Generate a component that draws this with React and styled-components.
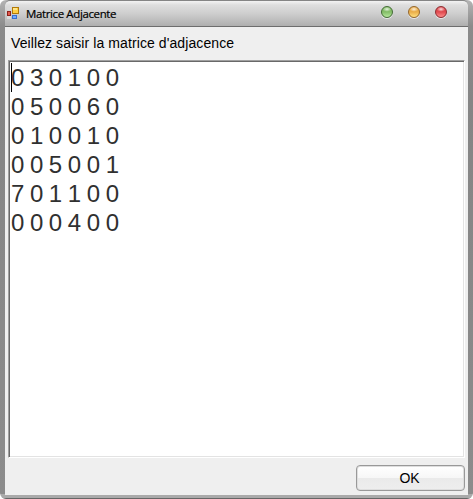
import React from "react";
import styled, { createGlobalStyle } from "styled-components";

const GlobalStyle = createGlobalStyle`
  * { box-sizing: border-box; }
  body { margin: 0; background: #fff; overflow: hidden; }
`;

const Window = styled.div`
  width: 473px;
  height: 499px;
  display: flex;
  flex-direction: column;
  padding: 0 5px 5px;
  overflow: hidden;
  border-radius: 6px;
  background: linear-gradient(#b4b4b4, #8b8b8b 26px, #858585 100px, #8c8c8c 494px, #aaa 494px, #aaa 498px, #666 498px);
  font-family: "Liberation Sans", Arial, sans-serif;
`;

const TitleBar = styled.header`
  height: 27px;
  flex: none;
  display: flex;
  align-items: center;
  padding: 0 21px 0 1px;
  border-top: 1px solid #858585;
  border-bottom: 1px solid #6d6d6d;
  border-radius: 5px 5px 0 0;
  background: linear-gradient(#f3f3f3, #dedede 4px, #cfcfcf 12px, #afafaf);
`;

const AppIcon = styled.svg`
  width: 14px;
  height: 14px;
  flex: none;
  align-self: flex-start;
  margin-top: 5px;
`;

const Title = styled.h1`
  margin: 0 auto 0 6px;
  font: 500 11.5px/16px "Open Sans", "Noto Sans", sans-serif;
  letter-spacing: -0.38px;
  color: #000;
  -webkit-text-stroke: 0.2px #000;
  white-space: nowrap;
`;

const Controls = styled.div`
  display: flex;
  gap: 15px;
  margin-top: -3px;
`;

const Orb = styled.button`
  width: 12px;
  height: 12px;
  padding: 0;
  border: 1px solid ${(p) => p.$edge};
  border-radius: 50%;
  background: radial-gradient(ellipse 4px 2.5px at 50% 22%, #fffc, #fff0),
    linear-gradient(${(p) => p.$mid}, ${(p) => p.$mid} 50%, ${(p) => p.$low});
  box-shadow: 0 1px 0 #e8e8e8;
`;

const Client = styled.main`
  flex: 1;
  display: flex;
  flex-direction: column;
  padding: 0 3px 4px;
  background: #efefef;
`;

const Prompt = styled.label`
  height: 33px;
  flex: none;
  padding: 8px 0 0 3px;
  font-size: 14px;
  line-height: 17px;
  letter-spacing: 0.09px;
  color: #000;
  white-space: nowrap;
`;

const Matrix = styled.div`
  width: 457px;
  height: 398px;
  flex: none;
  padding: 1px 0 0 2px;
  border: 1px solid;
  border-color: #a0a0a0 #fff #fff #a0a0a0;
  box-shadow: inset 1px 1px 0 #696969, inset -1px -1px 0 #e3e3e3;
  background: #fff;
  display: flex;
`;

const Caret = styled.span`
  width: 1px;
  height: 29px;
  margin-top: 1px;
  background: #000;
`;

const Values = styled.pre`
  margin: 1px 0 0 -1px;
  font: 24px/29px "Liberation Sans", Arial, sans-serif;
  letter-spacing: -0.54px;
  color: #303030;
`;

const Actions = styled.footer`
  display: flex;
  justify-content: flex-end;
  padding-top: 7px;
`;

const OkButton = styled.button`
  width: 109px;
  height: 26px;
  padding: 0 2px 0 0;
  border: 1px solid #999;
  border-radius: 4px;
  background: linear-gradient(#fff, #f7f7f7 48%, #eaeaea 52%, #eee);
  box-shadow: inset 0 0 0 1px #dedede;
  font: 14px "Liberation Sans", Arial, sans-serif;
  color: #000;
`;

const rows = ["0 3 0 1 0 0", "0 5 0 0 6 0", "0 1 0 0 1 0", "0 0 5 0 0 1", "7 0 1 1 0 0", "0 0 0 4 0 0"];

const orbs = [
  { name: "Réduire", edge: "#436b35", mid: "#84bd68", low: "#b5e89c" },
  { name: "Agrandir", edge: "#94662b", mid: "#eaae4a", low: "#ffe07e" },
  { name: "Fermer", edge: "#8c2c30", mid: "#e04b50", low: "#ff8c8b" },
];

function FormIcon() {
  return (
    <AppIcon viewBox="0 0 14 14" shapeRendering="crispEdges">
      <path d="M1 0h4v4H1zM1 10h4v3H1z" fill="#dadada" />
      <path d="M1 5h4v5H1z" fill="#8e211b" />
      <path d="M2 6h2v3H2z" fill="#e0594d" />
      <path d="M6 1h7v7H6z" fill="#b27a08" />
      <path d="M7 2h5v5H7z" fill="#ffcf43" />
      <path d="M7 2h4v2H7z" fill="#ffe68d" />
      <path d="M6 9h5v4H6z" fill="#366fce" />
      <path d="M7 10h3v2H7z" fill="#75aaff" />
    </AppIcon>
  );
}

export default function App() {
  return (
    <>
      <GlobalStyle />
      <Window>
        <TitleBar>
          <FormIcon />
          <Title>Matrice Adjacente</Title>
          <Controls>
            {orbs.map((o) => (
              <Orb key={o.name} aria-label={o.name} $edge={o.edge} $mid={o.mid} $low={o.low} />
            ))}
          </Controls>
        </TitleBar>
        <Client>
          <Prompt>Veillez saisir la matrice d'adjacence</Prompt>
          <Matrix>
            <Caret />
            <Values>{rows.join("\n")}</Values>
          </Matrix>
          <Actions>
            <OkButton>OK</OkButton>
          </Actions>
        </Client>
      </Window>
    </>
  );
}
